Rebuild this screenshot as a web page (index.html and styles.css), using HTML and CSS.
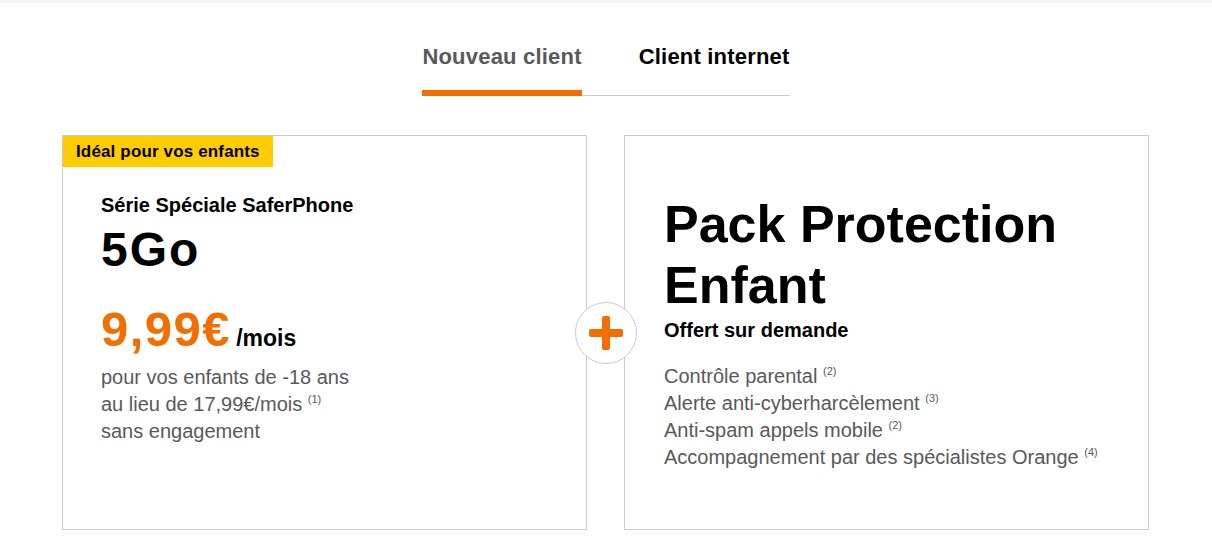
FILE: index.html
```html
<!DOCTYPE html>
<html lang="fr">
<head>
<meta charset="utf-8">
<title>Offres SaferPhone</title>
<link rel="stylesheet" href="styles.css">
</head>
<body>
<div class="topbar"></div>
<nav class="tabs">
  <div class="tab tab-active">Nouveau client</div>
  <div class="tab">Client internet</div>
</nav>
<main class="cards">
  <section class="card">
    <div class="badge">Idéal pour vos enfants</div>
    <div class="card-body card-body-left">
      <div class="subtitle">Série Spéciale SaferPhone</div>
      <div class="data">5Go</div>
      <div class="price"><span class="amount">9,99€</span><span class="per">/mois</span></div>
      <p class="desc">pour vos enfants de -18 ans<br>au lieu de 17,99€/mois <sup class="note">(1)</sup><br>sans engagement</p>
    </div>
  </section>
  <section class="card">
    <div class="card-body card-body-right">
      <h2 class="pack-title">Pack Protection Enfant</h2>
      <div class="offer">Offert sur demande</div>
      <ul class="features">
        <li>Contrôle parental <sup class="note">(2)</sup></li>
        <li>Alerte anti-cyberharcèlement <sup class="note">(3)</sup></li>
        <li>Anti-spam appels mobile <sup class="note">(2)</sup></li>
        <li>Accompagnement par des spécialistes Orange <sup class="note">(4)</sup></li>
      </ul>
    </div>
  </section>
  <div class="plus" aria-hidden="true">
    <svg width="34" height="34" viewBox="0 0 34 34">
      <rect x="0" y="13" width="34" height="8" rx="2" fill="#f16e00"/>
      <rect x="13" y="0" width="8" height="34" rx="2" fill="#f16e00"/>
    </svg>
  </div>
</main>
</body>
</html>
```
FILE: styles.css
```css
* { box-sizing: border-box; }

body {
  margin: 0;
  background: #fff;
  font-family: "Liberation Sans", Arial, Helvetica, sans-serif;
  color: #000;
}

.topbar {
  height: 3px;
  background: #f3f3f3;
}

.tabs {
  display: flex;
  justify-content: center;
  align-items: flex-start;
  gap: 57px;
  width: max-content;
  margin: 40px auto 0;
  border-bottom: 1px solid #cccccc;
}

.tab {
  font-size: 22px;
  font-weight: 700;
  line-height: 24px;
  letter-spacing: 0.2px;
  padding: 2px 0 21px;
  color: #000;
  border-bottom: 6px solid transparent;
  margin-bottom: -1px;
}

.tab-active {
  color: #595959;
  border-bottom-color: #f16e00;
}

.cards {
  position: relative;
  display: grid;
  grid-template-columns: 1fr 1fr;
  gap: 37px;
  width: 1087px;
  margin: 39px 0 0 62px;
}

.card {
  height: 395px;
  border: 1px solid #cccccc;
  display: flex;
  flex-direction: column;
  align-items: flex-start;
}

.badge {
  background: #ffcc00;
  font-size: 17px;
  font-weight: 700;
  line-height: 31px;
  letter-spacing: 0.15px;
  padding: 0 13px;
}

.card-body-left {
  padding: 0 38px;
  margin-top: 26px;
}

.card-body-right {
  padding: 58px 39px 0;
}

.subtitle {
  font-size: 20px;
  font-weight: 700;
  line-height: 24px;
}

.data {
  margin-top: 9px;
  font-size: 48px;
  font-weight: 700;
  line-height: 48px;
  letter-spacing: 2px;
}

.price {
  margin-top: 29px;
  display: flex;
  align-items: baseline;
  gap: 5px;
  line-height: 52px;
}

.amount {
  font-size: 49px;
  font-weight: 700;
  color: #f16e00;
  letter-spacing: 1.5px;
}

.per {
  font-size: 23px;
  font-weight: 700;
  line-height: 23px;
}

.desc {
  margin: 9px 0 0;
  font-size: 20px;
  line-height: 27px;
  color: #595959;
}

.note {
  font-size: 11px;
  line-height: 0;
  vertical-align: 8px;
}

.pack-title {
  margin: 0;
  font-size: 52px;
  font-weight: 700;
  line-height: 61px;
}

.offer {
  margin-top: 2px;
  font-size: 20px;
  font-weight: 700;
  line-height: 24px;
}

.features {
  list-style: none;
  margin: 21px 0 0;
  padding: 0;
  font-size: 20px;
  line-height: 27px;
  color: #595959;
}

.plus {
  position: absolute;
  left: 50%;
  top: 50%;
  width: 62px;
  height: 62px;
  transform: translate(-50%, -50%);
  border: 1px solid #cccccc;
  border-radius: 50%;
  background: #fff;
  display: flex;
  align-items: center;
  justify-content: center;
}
```
